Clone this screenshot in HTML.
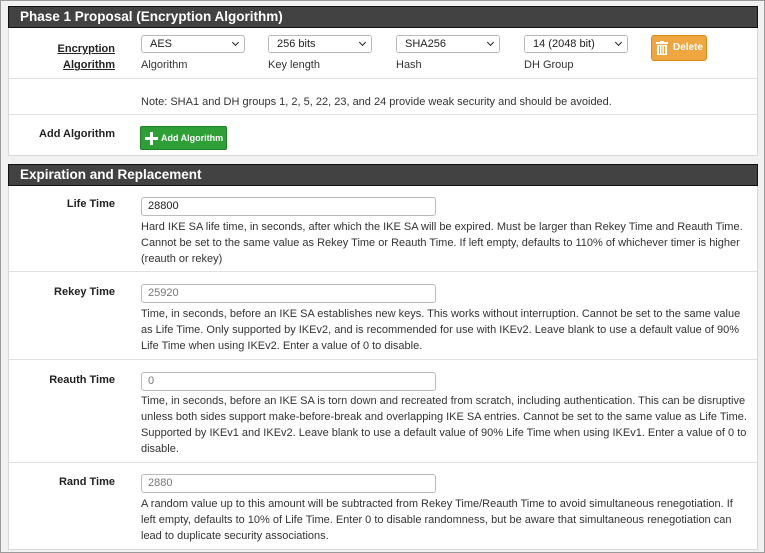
<!DOCTYPE html>
<html><head><style>
*{box-sizing:border-box;margin:0;padding:0}
body{width:765px;height:553px;background:#f1f1f1;border:1px solid #9a9a9a;font-family:"Liberation Sans",sans-serif;font-size:11px;color:#222;position:relative;overflow:hidden}
.panel{position:absolute;left:7px;width:750px;background:#fff;border:1px solid #d8d8d8;border-top:none}
.hd{height:22px;background:#424242;border:1px solid #111;color:#fff;font-weight:bold;font-size:13.5px;line-height:20px;padding-left:11px;margin:0 -1px}
.row{position:relative;border-bottom:1px solid #e0e0e0}
.row:last-child{border-bottom:none}
.lbl{position:absolute;right:642px;font-weight:bold;font-size:11px;text-align:right}
.sel{position:absolute;height:18px;border:1px solid #b8b8b8;border-radius:3px;font-size:11px;line-height:16px;padding-left:8px;background:#fff}
.sel:after{content:"";position:absolute;right:6px;top:4px;width:4px;height:4px;border-right:1.5px solid #222;border-bottom:1.5px solid #222;transform:rotate(45deg)}
.sub{position:absolute;font-size:11px;color:#333;white-space:nowrap}
.inp{position:absolute;left:132px;width:295px;height:19px;border:1px solid #bbb;border-radius:3px;font-size:11px;line-height:17px;padding-left:6px}
.help{position:absolute;left:132px;width:606px;line-height:16px;font-size:11px;color:#333}
</style></head><body>
<div class="panel" style="top:5px;height:150px">
 <div class="hd">Phase 1 Proposal (Encryption Algorithm)</div>
 <div class="row" style="height:51px">
  <div class="lbl" style="top:13px;line-height:16px;text-decoration:underline">Encryption<br>Algorithm</div>
  <div class="sel" style="left:132px;top:7px;width:104px">AES</div>
  <div class="sub" style="left:132px;top:31px">Algorithm</div>
  <div class="sel" style="left:259px;top:7px;width:104px">256 bits</div>
  <div class="sub" style="left:259px;top:31px">Key length</div>
  <div class="sel" style="left:387px;top:7px;width:104px">SHA256</div>
  <div class="sub" style="left:387px;top:31px">Hash</div>
  <div class="sel" style="left:515px;top:7px;width:104px">14 (2048 bit)</div>
  <div class="sub" style="left:515px;top:31px">DH Group</div>
  <div style="position:absolute;left:642px;top:7px;width:56px;height:26px;background:#f0a640;border:1px solid #e08a10;border-radius:3px;color:#fff;font-weight:bold;font-size:10px;line-height:24px;padding-left:21px;white-space:nowrap">
   <svg style="position:absolute;left:4px;top:5px" width="12" height="14" viewBox="0 0 12 14"><rect x="0" y="1" width="12" height="2" fill="#fff"/><rect x="4" y="0" width="4" height="2" fill="#fff"/><rect x="1" y="4" width="10" height="10" fill="#fff"/><rect x="3" y="5" width="1" height="8" fill="#f0a640"/><rect x="5.5" y="5" width="1" height="8" fill="#f0a640"/><rect x="8" y="5" width="1" height="8" fill="#f0a640"/></svg>Delete</div>
 </div>
 <div class="row" style="height:36px"><div class="sub" style="left:132px;top:17px">Note: SHA1 and DH groups 1, 2, 5, 22, 23, and 24 provide weak security and should be avoided.</div></div>
 <div class="row" style="height:40px">
  <div class="lbl" style="top:13px">Add Algorithm</div>
  <div style="position:absolute;left:131px;top:11px;width:87px;height:24px;background:#2e9e36;border:1px solid #1f7f25;border-radius:2px;color:#fff;font-weight:bold;font-size:9px;line-height:22px;padding-left:20px;white-space:nowrap">
   <svg style="position:absolute;left:4px;top:5px" width="13" height="13"><rect x="5" y="0" width="3" height="13" fill="#fff"/><rect x="0" y="5" width="13" height="3" fill="#fff"/></svg>Add Algorithm</div>
 </div>
</div>
<div class="panel" style="top:163px;height:386px">
 <div class="hd">Expiration and Replacement</div>
 <div class="row" style="height:86px">
  <div class="lbl" style="top:12px">Life Time</div>
  <div class="inp" style="top:11px;color:#222">28800</div>
  <div class="help" style="top:33px">Hard IKE SA life time, in seconds, after which the IKE SA will be expired. Must be larger than Rekey Time and Reauth Time. Cannot be set to the same value as Rekey Time or Reauth Time. If left empty, defaults to 110% of whichever timer is higher (reauth or rekey)</div>
 </div>
 <div class="row" style="height:88px">
  <div class="lbl" style="top:14px">Rekey Time</div>
  <div class="inp" style="top:12px;color:#777">25920</div>
  <div class="help" style="top:34px">Time, in seconds, before an IKE SA establishes new keys. This works without interruption. Cannot be set to the same value as Life Time. Only supported by IKEv2, and is recommended for use with IKEv2. Leave blank to use a default value of 90% Life Time when using IKEv2. Enter a value of 0 to disable.</div>
 </div>
 <div class="row" style="height:103px">
  <div class="lbl" style="top:14px">Reauth Time</div>
  <div class="inp" style="top:12px;color:#777">0</div>
  <div class="help" style="top:33px">Time, in seconds, before an IKE SA is torn down and recreated from scratch, including authentication. This can be disruptive unless both sides support make-before-break and overlapping IKE SA entries. Cannot be set to the same value as Life Time. Supported by IKEv1 and IKEv2. Leave blank to use a default value of 90% Life Time when using IKEv1. Enter a value of 0 to disable.</div>
 </div>
 <div class="row" style="height:86px">
  <div class="lbl" style="top:13px">Rand Time</div>
  <div class="inp" style="top:11px;color:#777">2880</div>
  <div class="help" style="top:33px">A random value up to this amount will be subtracted from Rekey Time/Reauth Time to avoid simultaneous renegotiation. If<br>left empty, defaults to 10% of Life Time. Enter 0 to disable randomness, but be aware that simultaneous renegotiation can lead to duplicate security associations.</div>
 </div>
</div>
</body></html>
